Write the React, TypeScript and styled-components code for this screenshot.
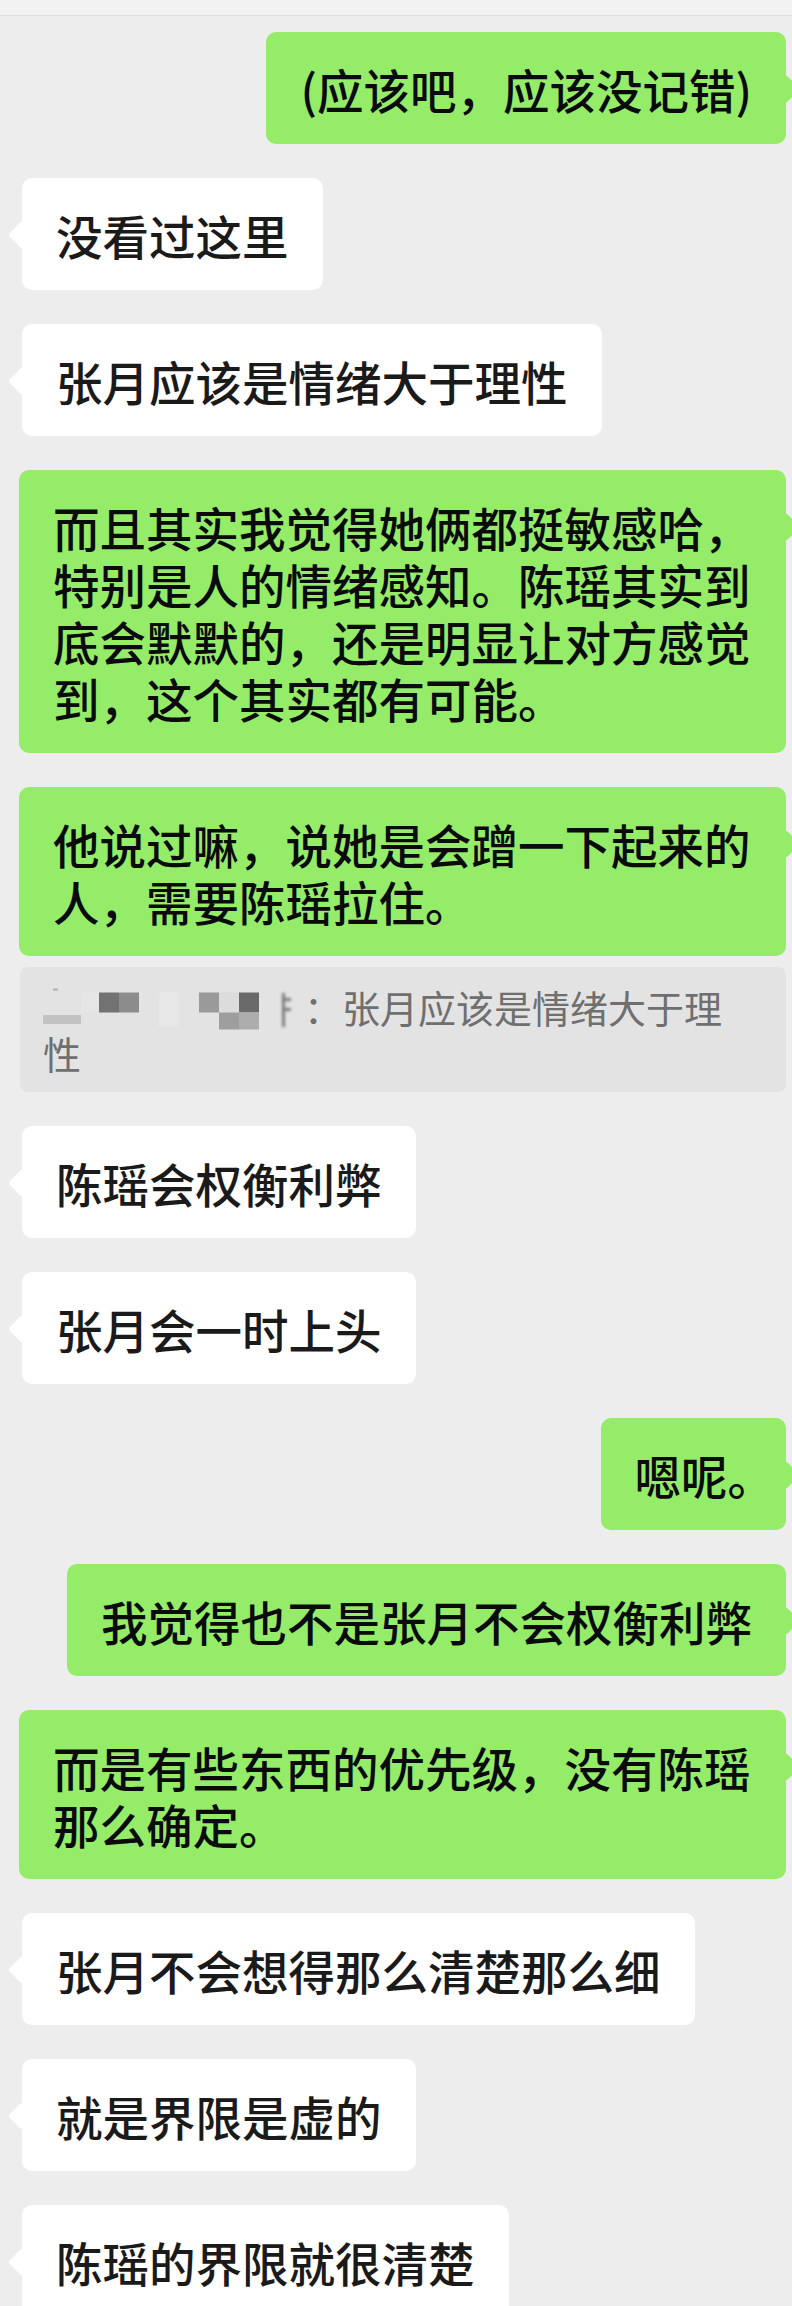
import React from "react";
import styled, { createGlobalStyle } from "styled-components";

type Side = "me" | "them";

interface Message {
  side: Side;
  text: string;
  quote?: string;
}

const messages: Message[] = [
  { side: "me", text: "(应该吧，应该没记错)" },
  { side: "them", text: "没看过这里" },
  { side: "them", text: "张月应该是情绪大于理性" },
  {
    side: "me",
    text: "而且其实我觉得她俩都挺敏感哈，特别是人的情绪感知。陈瑶其实到底会默默的，还是明显让对方感觉到，这个其实都有可能。",
  },
  {
    side: "me",
    text: "他说过嘛，说她是会蹭一下起来的人，需要陈瑶拉住。",
    quote: "：张月应该是情绪大于理性",
  },
  { side: "them", text: "陈瑶会权衡利弊" },
  { side: "them", text: "张月会一时上头" },
  { side: "me", text: "嗯呢。" },
  { side: "me", text: "我觉得也不是张月不会权衡利弊" },
  { side: "me", text: "而是有些东西的优先级，没有陈瑶那么确定。" },
  { side: "them", text: "张月不会想得那么清楚那么细" },
  { side: "them", text: "就是界限是虚的" },
  { side: "them", text: "陈瑶的界限就很清楚" },
];

const GlobalStyle = createGlobalStyle`
  html, body {
    margin: 0;
    padding: 0;
    background: #ededed;
  }
  body {
    font-family: "Noto Sans CJK SC", "Noto Sans", sans-serif;
    overflow-x: hidden;
  }
`;

const Page = styled.div`
  width: 792px;
  min-height: 2306px;
  background: #ededed;
  overflow: hidden;
`;

const TopBar = styled.div`
  height: 15px;
  background: #f2f2f2;
  border-bottom: 1px solid #e0e0e0;
`;

const Thread = styled.div`
  display: flex;
  flex-direction: column;
  gap: 34px;
  padding: 16px 6px 40px 0;
`;

const Row = styled.div<{ $side: Side }>`
  display: flex;
  flex-direction: column;
  gap: 11px;
  align-items: ${(p) => (p.$side === "me" ? "flex-end" : "flex-start")};
  padding-left: ${(p) => (p.$side === "me" ? "0" : "22px")};
`;

// short one-line bubbles set a trailing "。" half width, as the chat app does
const Bubble = styled.div<{ $side: Side; $trim?: boolean }>`
  position: relative;
  box-sizing: border-box;
  max-width: 767px;
  padding: 27.5px 34px;
  border-radius: 10px;
  font-size: 46.5px;
  line-height: 57px;
  font-weight: 500;
  color: ${(p) => (p.$side === "me" ? "#0b0b0b" : "#1a1a1a")};
  background: ${(p) => (p.$side === "me" ? "#95ec69" : "#ffffff")};
  ${(p) => (p.$trim ? "padding-right: 12px;" : "")}

  &::before {
    content: "";
    position: absolute;
    top: 47px;
    ${(p) => (p.$side === "me" ? "right: -10px;" : "left: -10px;")}
    width: 20px;
    height: 20px;
    border-radius: 3px;
    background: inherit;
    transform: rotate(45deg);
  }
`;

const Quote = styled.div`
  box-sizing: border-box;
  width: 766px;
  padding: 16.5px 35px 16.5px 23px;
  border-radius: 8px;
  background: #e3e3e3;
  color: #6f6f6f;
  font-size: 38px;
  line-height: 46px;
`;

const MosaicSvg = styled.svg`
  display: inline-block;
  vertical-align: top;
`;

// pixelated (hidden) sender name in the quote
const NameMosaic = () => (
  <MosaicSvg width="261" height="46" viewBox="0 0 261 46">
    <defs>
      <filter id="soft" x="-50%" y="-50%" width="200%" height="200%">
        <feGaussianBlur stdDeviation="1.4" />
      </filter>
    </defs>
    <rect x="10" y="4.5" width="5" height="2" fill="#b0b0b0" />
    <rect x="0" y="31" width="38" height="9" fill="#c2c2c2" />
    <rect x="38" y="8.5" width="18" height="20" fill="#e6e6e6" />
    <rect x="56" y="8.5" width="20" height="20" fill="#727272" />
    <rect x="76" y="8.5" width="20" height="20" fill="#8c8c8c" />
    <rect x="116" y="8.5" width="20" height="34" fill="#e7e7e7" />
    <rect x="156" y="8.5" width="20" height="20" fill="#9a9a9a" />
    <rect x="176" y="8.5" width="20" height="20" fill="#dcdcdc" />
    <rect x="176" y="28.5" width="20" height="17" fill="#9e9e9e" />
    <rect x="196" y="8.5" width="20" height="20" fill="#6a6a6a" />
    <rect x="196" y="28.5" width="20" height="17" fill="#adadad" />
    <g filter="url(#soft)" fill="#7a7a7a">
      <rect x="239" y="9" width="3" height="34" />
      <rect x="242" y="14" width="6" height="3" />
      <rect x="242" y="24" width="6" height="3" />
    </g>
  </MosaicSvg>
);

export default function App() {
  return (
    <>
      <GlobalStyle />
      <Page>
        <TopBar />
        <Thread>
          {messages.map((m, i) => (
            <Row key={i} $side={m.side}>
              <Bubble
                $side={m.side}
                $trim={m.text.length <= 14 && m.text.endsWith("。")}
              >
                {m.text}
              </Bubble>
              {m.quote && (
                <Quote>
                  <NameMosaic />
                  {m.quote}
                </Quote>
              )}
            </Row>
          ))}
        </Thread>
      </Page>
    </>
  );
}
